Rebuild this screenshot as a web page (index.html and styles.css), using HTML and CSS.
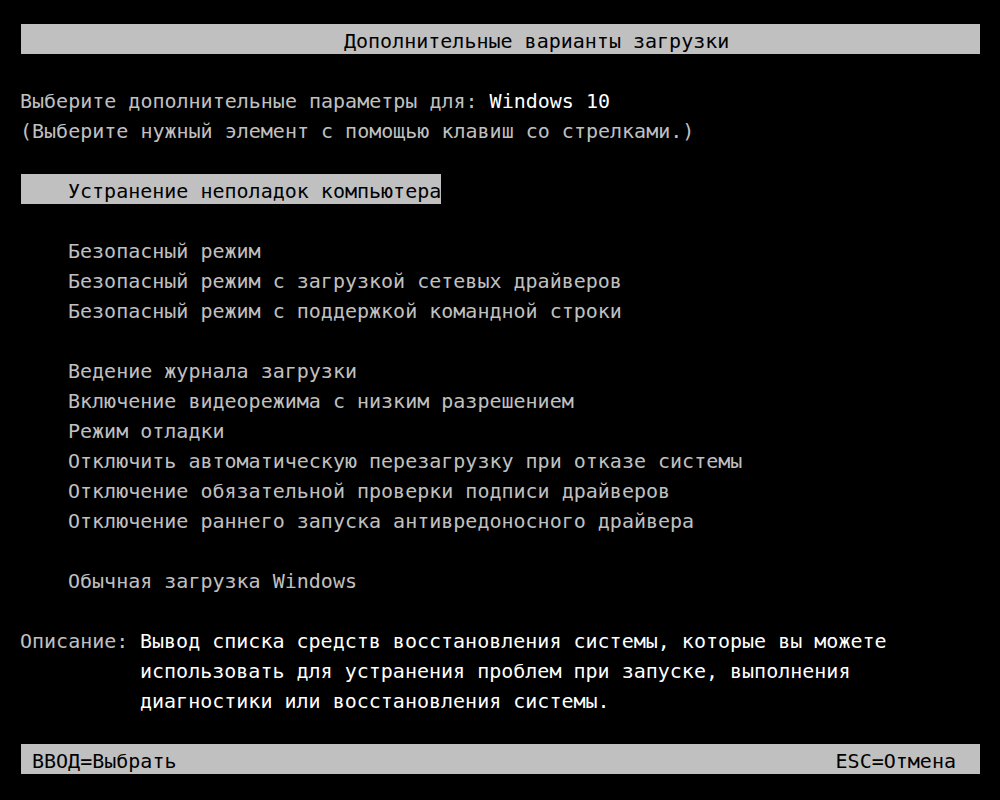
FILE: index.html
```html
<!DOCTYPE html>
<html lang="ru">

<head>
    <meta charset="UTF-8">
    <title>Дополнительные варианты загрузки</title>
    <link rel="stylesheet" href="styles.css">
</head>

<body>
    <div class="screen">
        <div class="bar title">Дополнительные варианты загрузки</div>

        <div class="row gap-above">Выберите дополнительные параметры для: <span class="hi">Windows 10</span></div>
        <div class="row">(Выберите нужный элемент с помощью клавиш со стрелками.)</div>

        <div class="group">
            <div class="row item selected">Устранение неполадок компьютера</div>
        </div>

        <div class="group">
            <div class="row item">Безопасный режим</div>
            <div class="row item">Безопасный режим с загрузкой сетевых драйверов</div>
            <div class="row item">Безопасный режим с поддержкой командной строки</div>
        </div>

        <div class="group">
            <div class="row item">Ведение журнала загрузки</div>
            <div class="row item">Включение видеорежима с низким разрешением</div>
            <div class="row item">Режим отладки</div>
            <div class="row item">Отключить автоматическую перезагрузку при отказе системы</div>
            <div class="row item">Отключение обязательной проверки подписи драйверов</div>
            <div class="row item">Отключение раннего запуска антивредоносного драйвера</div>
        </div>

        <div class="group">
            <div class="row item">Обычная загрузка Windows</div>
        </div>

        <div class="description">
            <div class="desc-label">Описание:</div>
            <div class="desc-text">
                <div class="row">Вывод списка средств восстановления системы, которые вы можете</div>
                <div class="row">использовать для устранения проблем при запуске, выполнения</div>
                <div class="row">диагностики или восстановления системы.</div>
            </div>
        </div>

        <div class="bar footer">
            <span>ВВОД=Выбрать</span>
            <span>ESC=Отмена</span>
        </div>
    </div>
</body>

</html>
```

FILE: styles.css
```css
body {
    margin: 0;
    background: #000;
    color: #c0c0c0;
    font-family: "DejaVu Sans Mono", monospace;
    font-size: 20px;
    /* taller line box pushes glyphs 2px down inside the 30px rows */
    line-height: 34px;
}

.screen {
    width: 960px;
    padding: 24px 20px;
}

.row {
    height: 30px;
    white-space: pre;
}

.hi {
    color: #fff;
}

.bar {
    background: #c0c0c0;
    color: #000;
    height: 30px;
    margin-left: 1px;
}

.title {
    padding-left: 323px;
}

.gap-above {
    margin-top: 30px;
}

.group {
    margin-top: 30px;
}

.item {
    padding-left: 48px;
}

.selected {
    background: #c0c0c0;
    color: #000;
    width: 373px;
    margin-left: 1px;
    padding-left: 47px;
}

.description {
    display: flex;
    margin-top: 30px;
}

.desc-label {
    width: 120px;
}

.desc-text {
    color: #fff;
}

.footer {
    display: flex;
    justify-content: space-between;
    margin-top: 30px;
    padding: 0 24px 0 11px;
}
```
